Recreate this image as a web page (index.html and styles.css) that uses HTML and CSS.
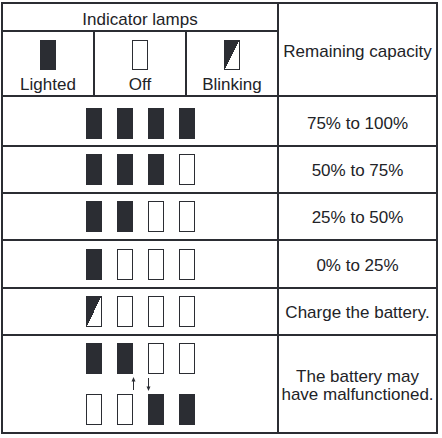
FILE: index.html
```html
<!DOCTYPE html>
<html lang="en">
<head>
<meta charset="utf-8">
<title>Indicator lamps</title>
<link rel="stylesheet" href="styles.css">
</head>
<body>
<div class="sheet">
  <div class="cell head">Indicator lamps</div>
  <div class="cell cap">Remaining capacity</div>

  <div class="cell legend"><span class="lamp on"></span><span class="label">Lighted</span></div>
  <div class="cell legend"><span class="lamp"></span><span class="label">Off</span></div>
  <div class="cell legend"><span class="lamp blink"></span><span class="label">Blinking</span></div>

  <div class="cell lamps row-a"><div class="set"><span class="lamp on"></span><span class="lamp on"></span><span class="lamp on"></span><span class="lamp on"></span></div></div>
  <div class="cell desc row-a">75% to 100%</div>

  <div class="cell lamps"><div class="set"><span class="lamp on"></span><span class="lamp on"></span><span class="lamp on"></span><span class="lamp"></span></div></div>
  <div class="cell desc">50% to 75%</div>

  <div class="cell lamps"><div class="set"><span class="lamp on"></span><span class="lamp on"></span><span class="lamp"></span><span class="lamp"></span></div></div>
  <div class="cell desc">25% to 50%</div>

  <div class="cell lamps"><div class="set"><span class="lamp on"></span><span class="lamp"></span><span class="lamp"></span><span class="lamp"></span></div></div>
  <div class="cell desc">0% to 25%</div>

  <div class="cell lamps"><div class="set"><span class="lamp blink"></span><span class="lamp"></span><span class="lamp"></span><span class="lamp"></span></div></div>
  <div class="cell desc">Charge the battery.</div>

  <div class="cell lamps stack">
    <div class="set"><span class="lamp on"></span><span class="lamp on"></span><span class="lamp"></span><span class="lamp"></span></div>
    <svg class="arrows" width="109" height="14" viewBox="0 0 109 14">
      <line x1="47.5" y1="2" x2="47.5" y2="13" stroke="#2b2d33" stroke-width="1"/>
      <polygon points="47.5,0 45.5,4.5 49.5,4.5" fill="#2b2d33"/>
      <line x1="62.5" y1="1" x2="62.5" y2="12" stroke="#2b2d33" stroke-width="1"/>
      <polygon points="62.5,14 60.5,9.5 64.5,9.5" fill="#2b2d33"/>
    </svg>
    <div class="set"><span class="lamp"></span><span class="lamp"></span><span class="lamp on"></span><span class="lamp on"></span></div>
  </div>
  <div class="cell desc two"><span class="line">The battery may</span><span class="line">have malfunctioned.</span></div>
</div>
</body>
</html>
```
FILE: styles.css
```css
html, body {
  margin: 0;
  padding: 0;
  background: #ffffff;
}

body {
  font-family: "Liberation Sans", Arial, sans-serif;
  font-size: 17px;
  color: #222327;
}

.sheet {
  display: inline-grid;
  grid-template-columns: 90px 90px 90px 157px;
  grid-template-rows: 26px 63px 48px 45px 45px 46px 45px 96px;
  gap: 2px;
  padding: 2px;
  margin: 2px 0 0 1px;
  background: #2b2d33;
}

.cell {
  background: #ffffff;
  display: flex;
  align-items: center;
  justify-content: center;
}

.head {
  grid-column: 1 / 4;
  align-items: flex-end;
  line-height: 20px;
}

.cap {
  grid-column: 4;
  grid-row: 1 / 3;
  line-height: 20px;
  padding-top: 4px;
}

.legend {
  flex-direction: column;
  justify-content: flex-start;
  padding-top: 8px;
  gap: 5px;
}

.label {
  line-height: 20px;
}

.lamps {
  grid-column: 1 / 4;
}

.row-a {
  padding-top: 4px;
}

.set {
  display: flex;
  gap: 15px;
}

.lamp {
  display: block;
  width: 16px;
  height: 31px;
  box-sizing: border-box;
  border: 1px solid #2b2d33;
  background: #ffffff;
}

.lamp.on {
  background: #2b2d33;
}

.lamp.blink {
  background: linear-gradient(to bottom right, #2b2d33 50%, #ffffff 50%);
}

.stack {
  flex-direction: column;
  gap: 3px;
}

.arrows {
  display: block;
}

.desc {
  line-height: 20px;
  text-align: center;
  padding-top: 3px;
}

.desc.row-a {
  padding-top: 5px;
}

.two {
  flex-direction: column;
  padding-top: 4px;
}

.two .line {
  display: block;
  line-height: 18px;
}
```
